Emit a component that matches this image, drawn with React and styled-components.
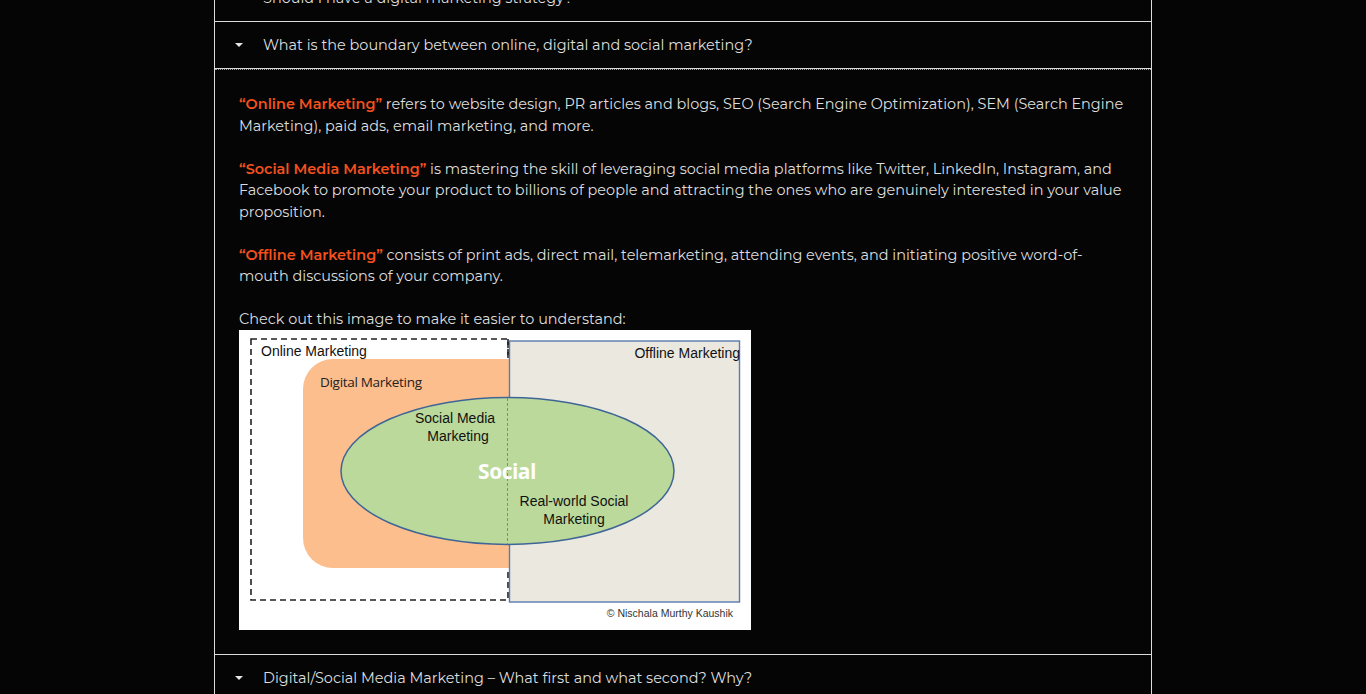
import React from 'react'
import styled, { createGlobalStyle } from 'styled-components'

const GlobalStyle = createGlobalStyle`
    html, body {
        margin: 0;
        padding: 0;
        background: #050505;
        overflow: hidden;
    }
    body {
        font-family: 'Montserrat', 'Open Sans', 'DejaVu Sans', sans-serif;
    }
`;

const Page = styled.div`
    height: 694px;
    overflow: hidden;
    background: #050505;
`;

const Acordeon = styled.div`
    width: 938px;
    box-sizing: border-box;
    margin: -25px auto 0;
    border-left: 1px solid #dcdcdc;
    border-right: 1px solid #dcdcdc;
`;

const Cabecera = styled.div`
    display: flex;
    align-items: center;
    gap: 20px;
    padding: 12px 20px;
    height: 22px;
    border-bottom: 1px solid #dcdcdc;
    color: #dedede;
    font-size: 14.45px;
    line-height: 22px;
`;

const Flecha = styled.span`
    width: 0;
    height: 0;
    border-left: 4px solid transparent;
    border-right: 4px solid transparent;
    border-top: 4px solid #e6e6e6;
    flex-shrink: 0;
`;

const Contenido = styled.div`
    border-top: 1px dotted #9a9a9a;
    border-bottom: 1px solid #dcdcdc;
    padding: 24px 24px 24px;
    color: #dedede;
    font-size: 14.45px;
    line-height: 21.55px;
    p {
        margin: 0 0 21.55px;
        &:last-child {
            margin-bottom: 0;
        }
    }
    strong {
        color: #f4511e;
        font-weight: 600;
    }
`;

const Diagrama = styled.svg`
    display: block;
    width: 512px;
    height: 300px;
    margin-top: -1px;
    background: #fff;
`;

const Esquema = () => (
    <Diagrama viewBox="0 0 512 300">
        <rect x="12" y="9" width="257" height="261" fill="none" stroke="#222" strokeWidth="1.6" strokeDasharray="6 4" />
        <rect x="64" y="29" width="236" height="209" rx="30" fill="#fdbe8d" />
        <rect x="270.5" y="11" width="230" height="261" fill="#ebe9df" stroke="#5a7ab0" strokeWidth="1.4" />
        <line x1="269" y1="9" x2="269" y2="29" stroke="#222" strokeWidth="1.6" strokeDasharray="6 4" />
        <ellipse cx="268.5" cy="141" rx="166.5" ry="73.5" fill="#bbd99b" stroke="#3f6597" strokeWidth="1.5" />
        <line x1="268.5" y1="68" x2="268.5" y2="214" stroke="#5a7ab0" strokeWidth="0.8" strokeDasharray="3 2" />
        <g fontFamily="'Liberation Sans', Arial, sans-serif" fill="#111">
            <text x="22" y="26" fontSize="14">Online Marketing</text>
            <text x="501" y="28" fontSize="14" textAnchor="end">Offline Marketing</text>
            <text x="216" y="93" fontSize="14" textAnchor="middle">Social Media</text>
            <text x="219" y="111" fontSize="14" textAnchor="middle">Marketing</text>
            <text x="335" y="176" fontSize="14" textAnchor="middle">Real-world Social</text>
            <text x="335" y="194" fontSize="14" textAnchor="middle">Marketing</text>
            <text x="494" y="287" fontSize="10.5" textAnchor="end" fill="#333">© Nischala Murthy Kaushik</text>
        </g>
        <text x="81" y="57" fontSize="13.5" fill="#222" fontFamily="'Open Sans', 'Liberation Sans', sans-serif" letterSpacing="-0.3">Digital Marketing</text>
        <text x="268" y="149" fontSize="21" fill="#fff" fontWeight="700" textAnchor="middle" fontFamily="'Open Sans', 'Liberation Sans', sans-serif" letterSpacing="-0.5">Social</text>
    </Diagrama>
);

const App = () => {
    return (
        <Page>
            <GlobalStyle />
            <Acordeon>
                <Cabecera>
                    <Flecha />
                    <span>Should I have a digital marketing strategy?</span>
                </Cabecera>
                <Cabecera>
                    <Flecha />
                    <span>What is the boundary between online, digital and social marketing?</span>
                </Cabecera>
                <Contenido>
                    <p>
                        <strong>“Online Marketing”</strong> refers to website design, PR articles and blogs, SEO (Search Engine Optimization), SEM (Search Engine Marketing), paid ads, email marketing, and more.
                    </p>
                    <p>
                        <strong>“Social Media Marketing”</strong> is mastering the skill of leveraging social media platforms like Twitter, LinkedIn, Instagram, and Facebook to promote your product to billions of people and attracting the ones who are genuinely interested in your value proposition.
                    </p>
                    <p>
                        <strong>“Offline Marketing”</strong> consists of print ads, direct mail, telemarketing, attending events, and initiating positive word-of-mouth discussions of your company.
                    </p>
                    <p>
                        Check out this image to make it easier to understand:
                        <Esquema />
                    </p>
                </Contenido>
                <Cabecera>
                    <Flecha />
                    <span>Digital/Social Media Marketing – What first and what second? Why?</span>
                </Cabecera>
            </Acordeon>
        </Page>
    );
}

export default App;
